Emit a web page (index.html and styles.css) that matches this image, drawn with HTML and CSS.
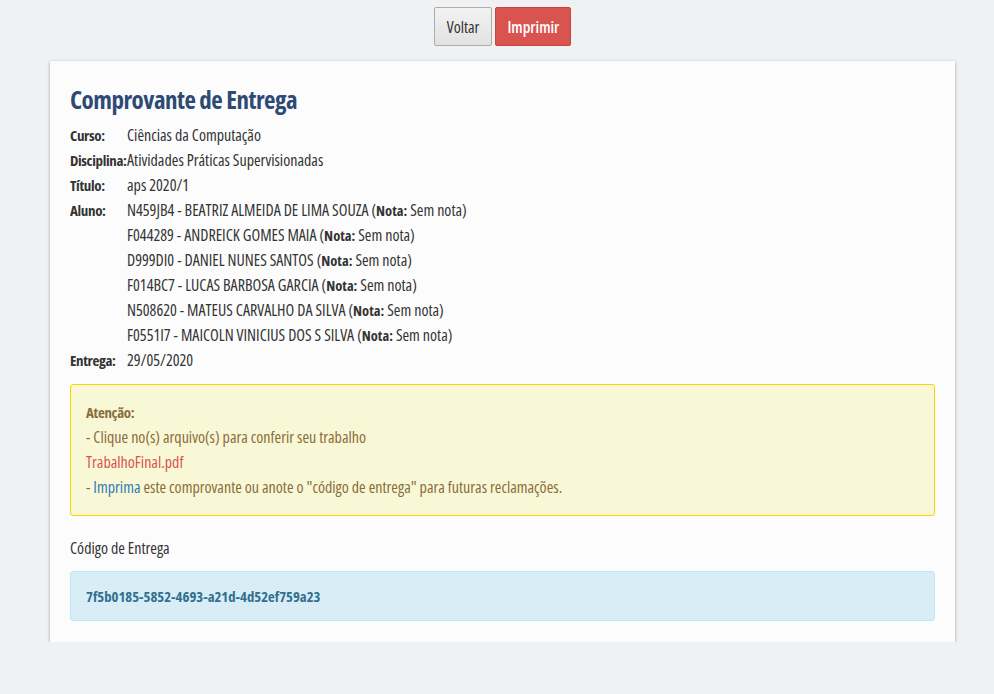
FILE: index.html
```html
<!DOCTYPE html>
<html lang="pt-BR">
<head>
<meta charset="utf-8">
<title>Comprovante de Entrega</title>
<link rel="stylesheet" href="styles.css">
</head>
<body>
<div class="actions">
  <button class="btn btn-default">Voltar</button>
  <button class="btn btn-danger">Imprimir</button>
</div>
<div class="card">
  <h1 class="title">Comprovante de Entrega</h1>
  <dl class="info">
    <dt>Curso:</dt><dd>Ciências da Computação</dd>
    <dt>Disciplina:</dt><dd>Atividades Práticas Supervisionadas</dd>
    <dt>Título:</dt><dd>aps 2020/1</dd>
    <dt>Aluno:</dt>
    <dd>
      <div>N459JB4 - BEATRIZ ALMEIDA DE LIMA SOUZA (<b>Nota:</b> Sem nota)</div>
      <div>F044289 - ANDREICK GOMES MAIA (<b>Nota:</b> Sem nota)</div>
      <div>D999DI0 - DANIEL NUNES SANTOS (<b>Nota:</b> Sem nota)</div>
      <div>F014BC7 - LUCAS BARBOSA GARCIA (<b>Nota:</b> Sem nota)</div>
      <div>N508620 - MATEUS CARVALHO DA SILVA (<b>Nota:</b> Sem nota)</div>
      <div>F0551I7 - MAICOLN VINICIUS DOS S SILVA (<b>Nota:</b> Sem nota)</div>
    </dd>
    <dt>Entrega:</dt><dd>29/05/2020</dd>
  </dl>
  <div class="alert-warning">
    <div class="alert-title">Atenção:</div>
    <div>- Clique no(s) arquivo(s) para conferir seu trabalho</div>
    <div><a class="file-link" href="#">TrabalhoFinal.pdf</a></div>
    <div>- <a class="print-link" href="#">Imprima</a> este comprovante ou anote o "código de entrega" para futuras reclamações.</div>
  </div>
  <div class="code-label">Código de Entrega</div>
  <div class="alert-info">7f5b0185-5852-4693-a21d-4d52ef759a23</div>
</div>
</body>
</html>
```
FILE: styles.css
```css
html, body {
  margin: 0;
  padding: 0;
}
body {
  background: #f0f1f3;
  font-family: "Open Sans", sans-serif;
  font-stretch: condensed;
  font-size: 16px;
  color: #333;
}
.actions {
  display: flex;
  justify-content: center;
  gap: 3px;
  padding: 7px 0 0 11px;
  height: 40px;
}
.btn {
  font-family: inherit;
  font-stretch: condensed;
  font-size: 16px;
  height: 39px;
  padding: 0 12px;
  border-radius: 2px;
  cursor: pointer;
}
.btn-default {
  background: linear-gradient(#f3f3f3, #e1e1e1);
  border: 1px solid #adadad;
  color: #333;
}
.btn-danger {
  background: #d9534f;
  border: 1px solid #c9433f;
  color: #fff;
  font-weight: 600;
  padding: 0 11px;
}
.card {
  margin: 14px 0 0 50px;
  width: 905px;
  box-sizing: border-box;
  background: #fcfcfc;
  box-shadow: 0 1px 3px rgba(0,0,0,0.35);
  padding: 20px 20px 21px;
}
.title {
  margin: 2px 0 8px;
  font-size: 25px;
  letter-spacing: -0.5px;
  font-weight: bold;
  color: #2d4a75;
  line-height: 32px;
}
.info {
  display: grid;
  grid-template-columns: 57px 1fr;
  margin: 0;
  line-height: 25px;
}
.info dt {
  font-weight: bold;
  font-size: 15px;
  letter-spacing: -0.35px;
}
.info dd {
  margin: 0;
}
.info b {
  font-size: 14.5px;
}
.alert-warning {
  margin-top: 11px;
  background: #f8f8d6;
  border: 1px solid #f5d800;
  border-radius: 3px;
  color: #8a6d3b;
  padding: 15px 15px 15px;
  line-height: 25px;
}
.alert-title {
  font-weight: bold;
  font-size: 15px;
  letter-spacing: -0.35px;
}
.file-link {
  color: #d9534f;
  text-decoration: none;
}
.print-link {
  color: #337ab7;
  text-decoration: none;
}
.code-label {
  margin-top: 20px;
  line-height: 25px;
}
.alert-info {
  margin-top: 10px;
  background: #d9edf7;
  border: 1px solid #bce8f1;
  border-radius: 3px;
  color: #31708f;
  font-weight: bold;
  font-size: 14.7px;
  padding: 12px 15px;
  line-height: 24px;
}
```
